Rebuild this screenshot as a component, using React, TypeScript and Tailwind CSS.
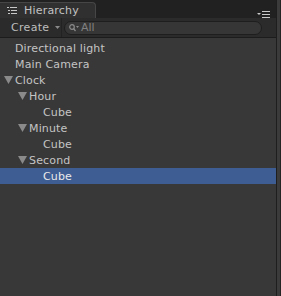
import React from "react";

const font = { fontFamily: '"DejaVu Sans", "Liberation Sans", sans-serif' };

function Arrow({ color = "#8a8a8a" }: { color?: string }) {
  return (
    <svg width="9" height="8" viewBox="0 0 9 8" className="shrink-0">
      <path d="M0 0 H9 L4.5 8 Z" fill={color} />
    </svg>
  );
}

type Row = { label: string; depth: number; arrow?: boolean; selected?: boolean };

const rows: Row[] = [
  { label: "Directional light", depth: 0 },
  { label: "Main Camera", depth: 0 },
  { label: "Clock", depth: 0, arrow: true },
  { label: "Hour", depth: 1, arrow: true },
  { label: "Cube", depth: 2 },
  { label: "Minute", depth: 1, arrow: true },
  { label: "Cube", depth: 2 },
  { label: "Second", depth: 1, arrow: true },
  { label: "Cube", depth: 2, selected: true },
];

const indents = ["pl-[15px]", "pl-[29px]", "pl-[43px]"];

export default function App() {
  return (
    <div className="w-[281px] h-[296px] bg-[#383838] flex overflow-hidden" style={font}>
      <div className="w-[276px] flex flex-col">
        {/* tab strip */}
        <div className="h-[18px] bg-[#212121] flex items-end relative">
          <div className="w-[96px] h-[16px] bg-[#303030] border-t border-r border-[#464646] rounded-tr-[4px] flex items-center gap-[7px] pl-[7px]">
            <svg width="10" height="8" viewBox="0 0 10 8">
              <rect x="0" y="0" width="2" height="1" fill="#c8c8c8" />
              <rect x="3" y="0" width="7" height="1" fill="#c8c8c8" />
              <rect x="1" y="3" width="2" height="1" fill="#c8c8c8" />
              <rect x="4" y="3" width="6" height="1" fill="#c8c8c8" />
              <rect x="1" y="6" width="2" height="1" fill="#c8c8c8" />
              <rect x="4" y="6" width="6" height="1" fill="#c8c8c8" />
            </svg>
            <span className="text-[11px] leading-none text-[#c2c2c2] tracking-[0.2px]">Hierarchy</span>
          </div>
          <svg width="13" height="7" viewBox="0 0 13 7" className="absolute right-[6px] top-[11px]">
            <path d="M0 2 H4 L2 4 Z" fill="#c8c8c8" />
            <rect x="5" y="0" width="8" height="1" fill="#c8c8c8" />
            <rect x="5" y="3" width="8" height="1" fill="#c8c8c8" />
            <rect x="5" y="6" width="8" height="1" fill="#c8c8c8" />
          </svg>
        </div>
        {/* toolbar */}
        <div className="h-[20px] bg-[#2b2b2b] border-b border-[#1c1c1c] flex items-center">
          <div className="flex items-center gap-[6px] pl-[11px] w-[62px] h-full border-r border-[#222]">
            <span className="text-[11px] text-[#bdbdbd] leading-none tracking-[0.3px]">Create</span>
            <svg width="5" height="3" viewBox="0 0 5 3">
              <path d="M0 0 H5 L2.5 3 Z" fill="#8a8a8a" />
            </svg>
          </div>
          <div className="ml-[2px] w-[198px] h-[14px] rounded-full bg-[#363636] border border-[#1e1e1e] flex items-center pl-[4px] gap-[1px]">
            <svg width="11" height="8" viewBox="0 0 11 8">
              <circle cx="3" cy="3" r="2.3" fill="none" stroke="#8a8a8a" strokeWidth="1.2" />
              <path d="M4.6 4.6 L6.5 7" stroke="#8a8a8a" strokeWidth="1.3" />
              <path d="M7 2 H10 L8.5 4 Z" fill="#8a8a8a" />
            </svg>
            <span className="text-[11px] text-[#808080] leading-none">All</span>
          </div>
        </div>
        {/* list */}
        <div className="flex flex-col pt-[2px]">
          {rows.map((r, i) => (
            <div
              key={i}
              className={`h-[16px] flex items-center relative ${indents[r.depth]} ${
                r.selected ? "bg-[#3d5d93]" : ""
              }`}
            >
              {r.arrow && (
                <span className={`absolute top-[4px] ${r.depth === 0 ? "left-[4px]" : "left-[18px]"}`}>
                  <Arrow />
                </span>
              )}
              <span
                className={`text-[11px] leading-none pt-[1px] tracking-[0.15px] ${
                  r.selected ? "text-[#eaeaea]" : "text-[#c4c4c4]"
                }`}
              >
                {r.label}
              </span>
            </div>
          ))}
        </div>
      </div>
      <div className="w-[1px] bg-[#1e1e1e]" />
      <div className="w-[3px] bg-[#3b3b3b]" />
      <div className="w-[1px] bg-[#242424]" />
    </div>
  );
}
